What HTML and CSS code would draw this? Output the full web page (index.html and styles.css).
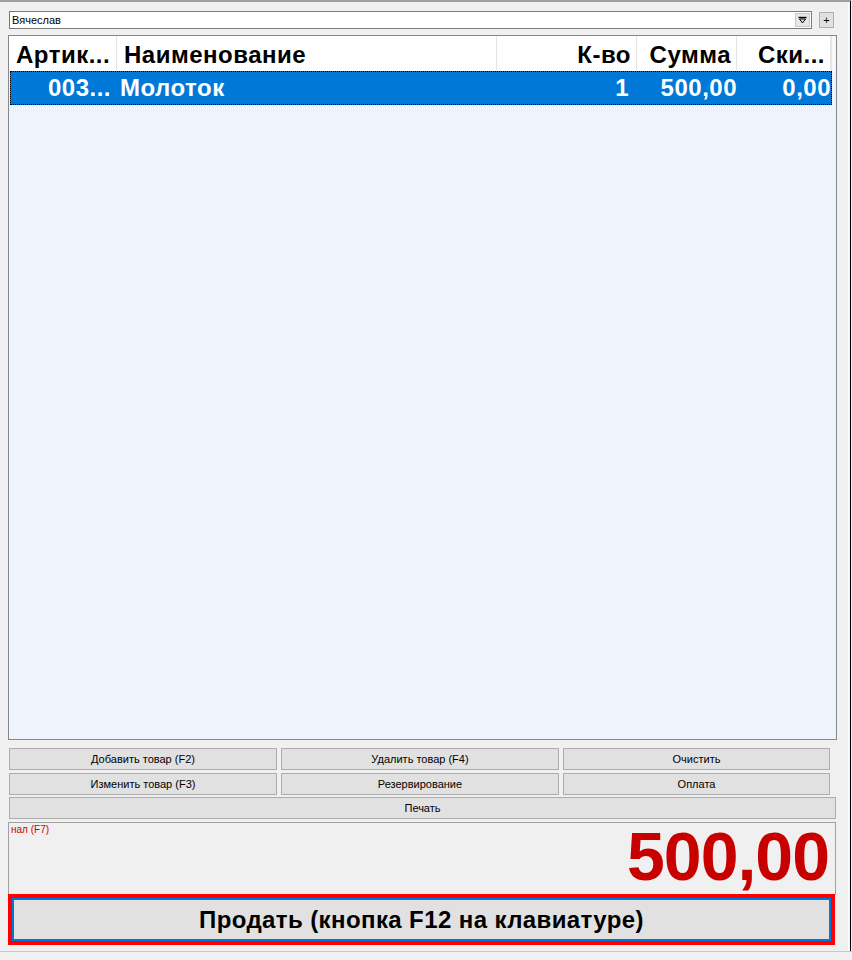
FILE: index.html
```html
<!DOCTYPE html>
<html lang="ru">
<head>
    <title>Касса</title>
    <meta charset="utf-8" />
    <link rel="stylesheet" href="styles.css">
</head>
<body>
<div class="window">
    <div class="content">
        <!--продавец-->
        <div class="top-bar">
            <div class="combo">
                <span class="combo-text">Вячеслав</span>
                <span class="combo-btn">
                    <svg width="9" height="8" viewBox="0 0 9 8">
                        <path d="M0.5 1.5 H8.5" stroke="#000" stroke-width="1.4"/>
                        <path d="M1.5 3 L4.5 7 L7.5 3 Z" fill="none" stroke="#000" stroke-width="1"/>
                    </svg>
                </span>
            </div>
            <button class="plus-btn">+</button>
        </div>

        <!--таблица товаров-->
        <div class="grid">
            <div class="grid-head">
                <div class="cell c-art left">Артик...</div>
                <div class="cell c-name left">Наименование</div>
                <div class="cell c-qty">К-во</div>
                <div class="cell c-sum">Сумма</div>
                <div class="cell c-disc">Ски...</div>
                <div class="c-fill"></div>
            </div>
            <div class="grid-row selected">
                <div class="cell c-art">003...</div>
                <div class="cell c-name left">Молоток</div>
                <div class="cell c-qty">1</div>
                <div class="cell c-sum">500,00</div>
                <div class="cell c-disc">0,00</div>
            </div>
        </div>

        <!--кнопки-->
        <div class="actions">
            <button class="btn">Добавить товар (F2)</button>
            <button class="btn">Удалить товар (F4)</button>
            <button class="btn">Очистить</button>
            <button class="btn">Изменить товар (F3)</button>
            <button class="btn">Резервирование</button>
            <button class="btn">Оплата</button>
        </div>
        <button class="btn btn-wide">Печать</button>

        <!--итого-->
        <div class="total">
            <div class="pay-type">нал (F7)</div>
            <div class="total-sum">500,00</div>
        </div>
        <div class="sell-frame">
            <button class="sell-btn">Продать (кнопка F12 на клавиатуре)</button>
        </div>
    </div>
</div>
<div class="status"></div>
</body>
</html>
```

FILE: styles.css
```css
/*окно*/
html, body{
    margin: 0;
    padding: 0;
    background: #f0f0f0;
    font-family: "Liberation Sans", Arial, sans-serif;
}
.window{
    width: 851px;
    height: 951px;
    box-sizing: border-box;
    border-top: 2px solid #a0a0a0;
    border-right: 1px solid #000;
}
.content{
    height: 100%;
    box-sizing: border-box;
    margin-right: 1px;
    border-right: 1px solid #fdfdfd;
    padding: 9px 0 0 8px;
}

/*выбор продавца*/
.top-bar{
    display: flex;
    align-items: flex-start;
    height: 18px;
}
.combo{
    width: 803px;
    height: 18px;
    margin-left: 1px;
    box-sizing: border-box;
    border: 1px solid #7a7a7a;
    background: #fff;
    display: flex;
    align-items: center;
    justify-content: space-between;
}
.combo-text{
    font-size: 11px;
    padding-left: 2px;
    color: #000;
}
.combo-btn{
    width: 15px;
    height: 14px;
    margin-right: 1px;
    background: #e8e8e8;
    border: 1px solid #c8c8c8;
    box-sizing: border-box;
    display: flex;
    align-items: center;
    justify-content: center;
}
.plus-btn{
    width: 15px;
    height: 16px;
    margin: 1px 0 0 7px;
    padding: 0;
    box-sizing: border-box;
    border: 1px solid #adadad;
    background: #e1e1e1;
    font-family: "Liberation Sans", Arial, sans-serif;
    font-size: 11px;
    line-height: 12px;
    color: #000;
}

/*таблица*/
.grid{
    width: 829px;
    height: 705px;
    margin-top: 6px;
    box-sizing: border-box;
    border: 1px solid #828790;
    background: #eef3fc;
}
.grid-head, .grid-row{
    display: flex;
    font-size: 24px;
    font-weight: bold;
    letter-spacing: 0.5px;
}
.grid-head{
    height: 35px;
    background: #fff;
}
.grid-head .cell{
    border-right: 1px solid #e5e5e5;
    line-height: 37px;
}
.c-fill{
    flex: 1;
    border-left: 1px solid #e5e5e5;
    background: #f8f8f8;
}
.cell{
    flex-shrink: 0;
    box-sizing: border-box;
    text-align: right;
    padding: 0 5px;
    white-space: nowrap;
    overflow: hidden;
}
.cell.left{
    text-align: left;
    padding-left: 7px;
}
.c-art{ width: 108px; }
.c-name{ width: 380px; }
.c-qty{ width: 140px; }
.c-sum{ width: 100px; }
.c-disc{ width: 94px; }
.grid-row.selected{
    width: 822px;
    height: 34px;
    margin-left: 1px;
    box-sizing: border-box;
    border: 1px dotted #000;
    background: #0078d7;
    color: #fff;
    line-height: 31px;
}
.grid-row .c-art{ width: 107px; padding-right: 7px; }
.grid-row .c-name{ padding-left: 2px; }
.grid-row .c-qty{ padding-right: 9px; }
.grid-row .c-sum{ padding-right: 1px; }
.grid-row .c-disc{ width: 93px; padding-right: 0; }

/*кнопки*/
.actions{
    display: grid;
    grid-template-columns: 268px 278px 267px;
    gap: 3px 4px;
    margin: 8px 0 0 1px;
}
.btn{
    height: 22px;
    padding: 0;
    box-sizing: border-box;
    border: 1px solid #adadad;
    background: #e1e1e1;
    font-family: "Liberation Sans", Arial, sans-serif;
    font-size: 11px;
    color: #000;
}
.btn-wide{
    display: block;
    width: 827px;
    margin: 2px 0 0 1px;
}

/*итого*/
.total{
    width: 828px;
    height: 73px;
    margin-top: 3px;
    box-sizing: border-box;
    border: 1px solid #a0a0a0;
    border-bottom: none;
}
.pay-type{
    font-size: 10px;
    line-height: 12px;
    color: #c80000;
    padding: 1px 0 0 2px;
}
.total-sum{
    text-align: right;
    font-size: 68px;
    font-weight: bold;
    line-height: 56px;
    margin-top: -8px;
    color: #c80000;
    padding-right: 6px;
    letter-spacing: -1px;
}
.sell-frame{
    width: 827px;
    height: 51px;
    box-sizing: border-box;
    border: 4px solid #ff0000;
    margin-top: -1px;
}
.sell-btn{
    display: block;
    width: 100%;
    height: 100%;
    padding: 0;
    border: 2px solid #0078d7;
    background: #e1e1e1;
    font-family: "Liberation Sans", Arial, sans-serif;
    font-size: 24px;
    font-weight: bold;
    letter-spacing: 0.4px;
    color: #000;
}
.status{
    border-top: 1px solid #c8c8c8;
    height: 8px;
}
```
